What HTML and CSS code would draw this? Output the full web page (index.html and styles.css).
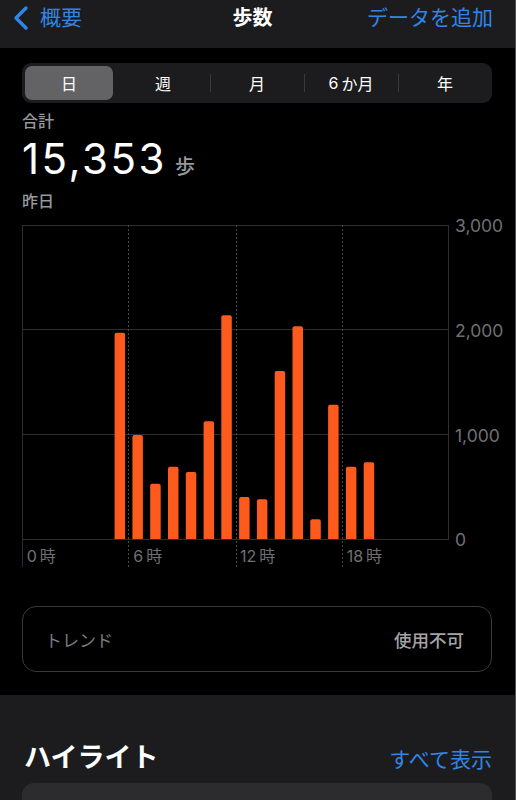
FILE: index.html
```html
<!DOCTYPE html>
<html lang="ja">
<head>
<meta charset="utf-8">
<title>歩数</title>
<link rel="stylesheet" href="styles.css">
</head>
<body>
<div class="screen">
  <header class="nav">
    <a class="back">
      <svg class="chev" width="18" height="26" viewBox="0 0 18 26"><polyline points="14,3 4,13 14,23" fill="none" stroke="#2f86e6" stroke-width="3.4" stroke-linecap="round" stroke-linejoin="round"/></svg>
      <span>概要</span>
    </a>
    <h1 class="title">歩数</h1>
    <a class="add">データを追加</a>
  </header>

  <main class="main">
    <div class="segments">
      <div class="seg active">日</div>
      <div class="seg">週</div>
      <div class="seg div">月</div>
      <div class="seg div">6<span class="ka">か月</span></div>
      <div class="seg div">年</div>
    </div>

    <div class="label total-label">合計</div>
    <div class="total"><span class="num">15,353</span><span class="unit">歩</span></div>
    <div class="label">昨日</div>

    <div class="chart">
      <svg width="493" height="352" viewBox="0 0 493 352">
        <defs><clipPath id="plot"><rect x="0" y="0" width="427" height="324"/></clipPath></defs>
        <g class="grid">
          <line x1="0" y1="10.5" x2="427" y2="10.5"/>
          <line x1="0" y1="114.5" x2="427" y2="114.5"/>
          <line x1="0" y1="219.5" x2="427" y2="219.5"/>
          <line x1="0" y1="324.5" x2="427" y2="324.5"/>
          <line x1="0.5" y1="10" x2="0.5" y2="352"/>
          <line x1="426.5" y1="10" x2="426.5" y2="324"/>
        </g>
        <g class="dots">
          <line x1="106.5" y1="10" x2="106.5" y2="352"/>
          <line x1="214.5" y1="10" x2="214.5" y2="352"/>
          <line x1="320.5" y1="10" x2="320.5" y2="352"/>
        </g>
        <g class="bars" clip-path="url(#plot)">
          <rect x="92.6" y="117.7" width="10.5" height="210" rx="2"/>
          <rect x="110.4" y="220" width="10.5" height="108" rx="2"/>
          <rect x="128.2" y="268.7" width="10.5" height="59" rx="2"/>
          <rect x="146.0" y="251.7" width="10.5" height="76" rx="2"/>
          <rect x="163.8" y="257" width="10.5" height="71" rx="2"/>
          <rect x="181.6" y="206.3" width="10.5" height="122" rx="2"/>
          <rect x="199.3" y="100.3" width="10.5" height="228" rx="2"/>
          <rect x="217.1" y="282" width="10.5" height="46" rx="2"/>
          <rect x="234.9" y="284.3" width="10.5" height="44" rx="2"/>
          <rect x="252.7" y="156" width="10.5" height="172" rx="2"/>
          <rect x="270.5" y="111.3" width="10.5" height="217" rx="2"/>
          <rect x="288.3" y="304.3" width="10.5" height="24" rx="2"/>
          <rect x="306.1" y="189.7" width="10.5" height="138" rx="2"/>
          <rect x="323.9" y="251.7" width="10.5" height="76" rx="2"/>
          <rect x="341.7" y="247.3" width="10.5" height="81" rx="2"/>
        </g>
        <g class="ylab">
          <text x="433" y="17.3">3,000</text>
          <text x="433" y="121.7">2,000</text>
          <text x="433" y="226.7">1,000</text>
          <text x="433" y="331.3">0</text>
        </g>
        <g class="xlab">
          <text x="4.7" y="347.3">0<tspan dx="3">時</tspan></text>
          <text x="111.3" y="347.3">6<tspan dx="3">時</tspan></text>
          <text x="218" y="347.3">12<tspan dx="3">時</tspan></text>
          <text x="324.7" y="347.3">18<tspan dx="3">時</tspan></text>
        </g>
      </svg>
    </div>

    <div class="trend">
      <span class="trend-name">トレンド</span>
      <span class="trend-val">使用不可</span>
    </div>
  </main>

  <section class="highlights">
    <div class="hl-head">
      <h2>ハイライト</h2>
      <a class="all">すべて表示</a>
    </div>
    <div class="hl-card"></div>
  </section>
</div>
</body>
</html>
```

FILE: styles.css
```css
* { box-sizing: border-box; }
html, body {
  margin: 0;
  padding: 0;
  background: #000;
}
body {
  font-family: Inter, "Noto Sans CJK JP", sans-serif;
  color: #fff;
  width: 516px;
  height: 800px;
  overflow: hidden;
}
.screen {
  width: 516px;
  height: 800px;
  border-right: 1px solid #505052;
  background: #000;
  overflow: hidden;
}

/* nav */
.nav {
  height: 48px;
  background: #1c1c1e;
  display: grid;
  grid-template-columns: 1fr auto 1fr;
  align-items: start;
  padding: 4px 22px 0 12px;
}
.back {
  display: flex;
  align-items: center;
  gap: 10px;
  color: #2f86e6;
  font-size: 21px;
  line-height: 28px;
}
.chev { display: block; margin-top: -1px; }
.title {
  margin: 0;
  font-size: 20px;
  font-weight: 700;
  line-height: 28px;
}
.add {
  justify-self: end;
  color: #2f86e6;
  font-size: 21px;
  line-height: 28px;
}

/* main */
.main {
  padding: 15px 23px 23px 22px;
}
.segments {
  height: 40px;
  background: #1c1c1e;
  border-radius: 9px;
  display: grid;
  grid-template-columns: repeat(5, 1fr);
}
.seg {
  position: relative;
  display: flex;
  align-items: center;
  justify-content: center;
  font-size: 16px;
  color: #fff;
  margin: 3px;
  border-radius: 7px;
}
.seg .ka { margin-left: 3px; }
.seg.active { background: #636366; }
.seg.div::before {
  content: "";
  position: absolute;
  left: -3px;
  top: 8px;
  bottom: 8px;
  width: 1px;
  background: #3a3a3c;
}
.label {
  font-size: 16px;
  line-height: 20px;
  font-weight: 500;
  color: #98989d;
}
.total-label { margin-top: 8px; }
.total {
  margin-top: 6px;
  height: 44px;
  display: flex;
  align-items: baseline;
  margin-bottom: 10px;
}
.num {
  font-size: 42px;
  line-height: 44px;
  font-weight: 400;
  letter-spacing: 2.5px;
}
.unit {
  font-size: 20px;
  color: #98989d;
  margin-left: 8px;
  font-weight: 500;
}

/* chart */
.chart {
  margin-top: 4px;
  margin-right: -23px;
  height: 352px;
}
.chart svg { display: block; }
.grid line { stroke: #2e2e30; stroke-width: 1; }
.dots line { stroke: #4a4a4c; stroke-width: 1; stroke-dasharray: 2 2; }
.bars rect { fill: #fd5a1e; }
.ylab text {
  font-family: Inter, sans-serif;
  font-size: 17.5px;
  fill: #707074;
}
.xlab text {
  font-family: Inter, "Noto Sans CJK JP", sans-serif;
  font-size: 16px;
  fill: #707074;
}

/* trend */
.trend {
  margin-top: 39px;
  height: 66px;
  border: 1px solid #3a3a3c;
  border-radius: 14px;
  display: flex;
  align-items: center;
  justify-content: space-between;
  padding: 0 27px 0 22px;
}
.trend-name {
  font-size: 17px;
  color: #7c7c80;
}
.trend-val {
  font-size: 17.5px;
  font-weight: 500;
  color: #a4a4a8;
}

/* highlights */
.highlights {
  background: #1c1c1e;
  height: 200px;
  padding: 45px 23px 0 24px;
}
.hl-head {
  display: flex;
  justify-content: space-between;
  align-items: baseline;
}
.hl-head h2 {
  margin: 0;
  font-size: 27px;
  line-height: 36px;
  font-weight: 700;
  color: #fff;
}
.all {
  font-size: 21px;
  color: #2f86e6;
}
.hl-card {
  margin: 7px 0 0 -2px;
  height: 120px;
  background: #2c2c2e;
  border-radius: 12px;
}
```
